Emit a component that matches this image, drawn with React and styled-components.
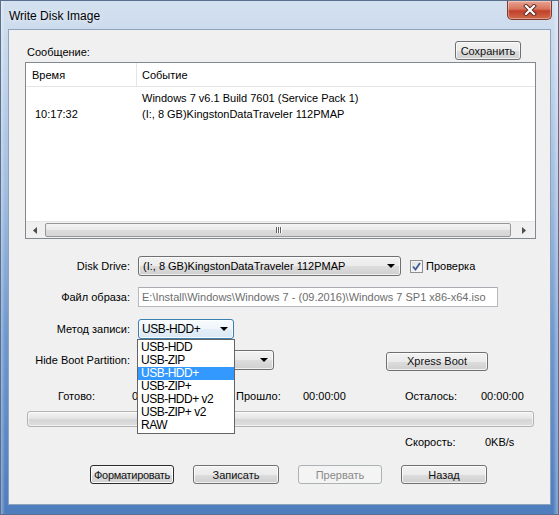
import React from "react";
import styled, { createGlobalStyle, css } from "styled-components";

const Global = createGlobalStyle`
  html, body { margin: 0; padding: 0; }
  body { width: 559px; height: 515px; overflow: hidden; font-family: "Liberation Sans", Arial, sans-serif; }
  * { box-sizing: border-box; }
`;

const Window = styled.div`
  width: 559px;
  height: 515px;
  display: flex;
  flex-direction: column;
  padding: 0 7px 9px 7px;
  background:
    linear-gradient(to right, rgba(255,255,255,0.35) 0, rgba(255,255,255,0) 4px, rgba(255,255,255,0) 552px, rgba(255,255,255,0.3) 556px),
    linear-gradient(to bottom, #d3e0ef 0%, #c4d6eb 12%, #9cb9de 40%, #6f98cf 65%, #4e7dbe 100%);
  border: 1px solid #5a6f8c;
`;

const TitleBar = styled.div`
  height: 28px;
  display: flex;
  align-items: flex-start;
  justify-content: space-between;
  padding-left: 1px;
`;

const Title = styled.div`
  font-size: 12px;
  color: #000;
  line-height: 14px;
  padding-top: 8px;
  text-shadow: 0 0 6px rgba(255,255,255,0.9);
`;

const CloseButton = styled.div`
  width: 45px;
  height: 19px;
  margin-right: -1px;
  border: 1px solid #7e3b32;
  border-top: none;
  border-radius: 0 0 5px 5px;
  background: linear-gradient(to bottom, #e8a493 0%, #d7735c 45%, #c2402a 55%, #cf6a4b 100%);
  display: flex;
  align-items: center;
  justify-content: center;
  box-shadow: inset 0 0 0 1px rgba(255,255,255,0.35);
`;

const Client = styled.div`
  flex: 1;
  border: 1px solid #8ea2bc;
  background: #f0f0f0;
  padding: 11px 14px 0 16px;
  display: flex;
  flex-direction: column;
  font-size: 11px;
  color: #000;
`;

const MessageHeader = styled.div`
  height: 19px;
  display: flex;
  align-items: center;
  justify-content: space-between;
  padding-left: 2px;
  padding-right: 15px;
`;

const PlainLabel = styled.span`
  font-size: 11px;
  line-height: 13px;
  padding-top: 3px;
`;

const Button = styled.button`
  font-family: "Liberation Sans", Arial, sans-serif;
  font-size: 11px;
  color: #111;
  height: 19px;
  width: ${p => p.$w}px;
  padding: 0;
  border: 1px solid #707070;
  border-radius: 3px;
  background: linear-gradient(to bottom, #f2f2f2 0%, #ebebeb 50%, #dddddd 51%, #cfcfcf 100%);
  box-shadow: inset 0 0 0 1px rgba(255,255,255,0.7);
  display: flex;
  align-items: center;
  justify-content: center;
  ${p => p.$default && css`
    border-color: #2b2b2b;
    box-shadow: inset 0 0 0 1px #fbfbfb;
    letter-spacing: -0.3px;
  `}
  ${p => p.disabled && css`
    color: #8a8a8a;
    border-color: #adb2b5;
    background: #f4f4f4;
    box-shadow: none;
  `}
`;

const ListView = styled.div`
  margin-top: 2px;
  height: 177px;
  border: 1px solid #828790;
  background: #fff;
  display: flex;
  flex-direction: column;
`;

const ListHeader = styled.div`
  height: 24px;
  display: flex;
  border-bottom: 1px solid #e5e5e5;
  background: #fff;
`;

const HeaderCell = styled.div`
  width: ${p => (p.$w ? `${p.$w}px` : "auto")};
  flex: ${p => (p.$w ? "none" : "1")};
  padding-left: ${p => p.$pad}px;
  display: flex;
  align-items: center;
  border-right: ${p => (p.$w ? "1px solid #e5e5e5" : "none")};
  font-size: 11px;
`;

const ListBody = styled.div`
  flex: 1;
  padding-top: 3px;
`;

const ListRow = styled.div`
  height: 16px;
  display: flex;
  align-items: center;
`;

const Cell = styled.div`
  width: ${p => (p.$w ? `${p.$w}px` : "auto")};
  flex: ${p => (p.$w ? "none" : "1")};
  padding-left: ${p => p.$pad}px;
  white-space: nowrap;
  font-size: 11px;
`;

const HScroll = styled.div`
  height: 17px;
  display: flex;
  align-items: stretch;
  background: #f0f0f0;
  border-top: 1px solid #e6e6e6;
`;

const ScrollArrow = styled.div`
  width: ${p => p.$w}px;
  display: flex;
  align-items: center;
  justify-content: center;
`;

const ScrollThumb = styled.div`
  flex: 1;
  margin: 1px 1px;
  border: 1px solid #979797;
  border-radius: 2px;
  background: linear-gradient(to bottom, #f4f4f4 0%, #e9e9e9 50%, #dcdcdc 51%, #d5d5d5 100%);
  display: flex;
  align-items: center;
  justify-content: center;
`;

const Grip = styled.div`
  display: flex;
  gap: 1px;
  & > span {
    width: 1px;
    height: 6px;
    background: #606060;
    box-shadow: 1px 0 0 #fff;
  }
`;

const FormRow = styled.div`
  display: flex;
  align-items: center;
  height: 20px;
  margin-top: ${p => p.$mt}px;
  position: relative;
`;

const FormLabel = styled.label`
  width: 105px;
  text-align: right;
  margin-right: 8px;
  font-size: 11px;
  line-height: 20px;
  flex: none;
`;

const Combo = styled.div`
  position: relative;
  width: ${p => p.$w}px;
  height: 20px;
  border: 1px solid #707070;
  border-radius: 3px;
  background: linear-gradient(to bottom, #f2f2f2 0%, #ebebeb 50%, #dddddd 51%, #cfcfcf 100%);
  box-shadow: inset 0 0 0 1px rgba(255,255,255,0.7);
  display: flex;
  align-items: center;
  padding-left: 4px;
  font-size: 11px;
  white-space: nowrap;
  ${p => p.$focus && css`
    border-color: #3c7fb1;
    background: linear-gradient(to bottom, #f7fbfe 0%, #eef5fa 50%, #e3eef7 51%, #dbe9f4 100%);
    padding-left: 3px;
    font-size: 12px;
    letter-spacing: -0.4px;
  `}
`;

const ComboArrow = styled.div`
  position: absolute;
  right: 5px;
  top: 50%;
  margin-top: -2px;
  width: 0;
  height: 0;
  border-left: 4px solid transparent;
  border-right: 4px solid transparent;
  border-top: 4px solid #000;
`;

const CheckWrap = styled.label`
  display: flex;
  align-items: center;
  margin-left: 9px;
  gap: 3px;
  font-size: 11px;
`;

const CheckBox = styled.div`
  width: 13px;
  height: 13px;
  border: 1px solid #8f8f8f;
  background: linear-gradient(135deg, #dcdcdc 0%, #ffffff 100%);
  box-shadow: inset 0 0 0 1px #f4f4f4;
  display: flex;
  align-items: center;
  justify-content: center;
`;

const TextBox = styled.div`
  width: ${p => p.$w}px;
  height: 20px;
  border: 1px solid #b5b8bd;
  border-top-color: #abadb3;
  background: #fff;
  color: #6d6d6d;
  font-size: 11px;
  display: flex;
  align-items: center;
  padding-left: 3px;
  white-space: nowrap;
  overflow: hidden;
`;

const DropList = styled.div`
  position: absolute;
  left: -2px;
  top: 19px;
  width: 98px;
  border: 1px solid #646464;
  background: #fff;
  padding: 1px 0 1px;
  z-index: 10;
`;

const DropItem = styled.div`
  height: 13px;
  line-height: 13px;
  font-size: 12px;
  letter-spacing: -0.5px;
  padding-left: 3px;
  white-space: nowrap;
  ${p => p.$selected && css`
    background: #3399ff;
    color: #fff;
  `}
`;

const StatusRow = styled.div`
  display: grid;
  grid-template-columns: ${p => p.$cols};
  padding-left: ${p => p.$pl}px;
  margin-top: ${p => p.$mt}px;
  height: 13px;
  line-height: 13px;
  font-size: 11px;
  white-space: nowrap;
`;

const Progress = styled.div`
  margin: 8px 2px 0 2px;
  height: 16px;
  border: 1px solid #b2b2b2;
  border-radius: 3px;
  background: linear-gradient(to bottom, #f3f3f3 0%, #e6e6e6 45%, #d6d6d6 55%, #dedede 100%);
  box-shadow: inset 0 0 0 1px rgba(255,255,255,0.6);
`;

const ButtonRow = styled.div`
  display: flex;
  gap: 19px;
  padding-left: 65px;
  margin-top: 16px;
`;

const Tri = ({ dir }) => (
  <svg width="4" height="7" viewBox="0 0 4 7">
    {dir === "left" ? <path d="M4 0 L0 3.5 L4 7 Z" fill="#4d4d4d" /> : <path d="M0 0 L4 3.5 L0 7 Z" fill="#4d4d4d" />}
  </svg>
);

export default function App() {
  const items = ["USB-HDD", "USB-ZIP", "USB-HDD+", "USB-ZIP+", "USB-HDD+ v2", "USB-ZIP+ v2", "RAW"];
  return (
    <>
      <Global />
      <Window>
        <TitleBar>
          <Title>Write Disk Image</Title>
          <CloseButton>
            <svg width="14" height="12" viewBox="0 0 14 12">
              <path d="M3 2 L11 10 M11 2 L3 10" stroke="#5a2a22" strokeWidth="4" strokeLinecap="square" />
              <path d="M3 2 L11 10 M11 2 L3 10" stroke="#ffffff" strokeWidth="2.2" strokeLinecap="square" />
            </svg>
          </CloseButton>
        </TitleBar>
        <Client>
          <MessageHeader>
            <PlainLabel>Сообщение:</PlainLabel>
            <Button $w={66}>Сохранить</Button>
          </MessageHeader>
          <ListView>
            <ListHeader>
              <HeaderCell $w={111} $pad={6}>Время</HeaderCell>
              <HeaderCell $pad={5}>Событие</HeaderCell>
            </ListHeader>
            <ListBody>
              <ListRow>
                <Cell $w={112} $pad={9}></Cell>
                <Cell $pad={4}>Windows 7 v6.1 Build 7601 (Service Pack 1)</Cell>
              </ListRow>
              <ListRow>
                <Cell $w={112} $pad={9}>10:17:32</Cell>
                <Cell $pad={4}>(I:, 8 GB)KingstonDataTraveler 112PMAP</Cell>
              </ListRow>
            </ListBody>
            <HScroll>
              <ScrollArrow $w={18}><Tri dir="left" /></ScrollArrow>
              <ScrollThumb>
                <Grip><span /><span /><span /></Grip>
              </ScrollThumb>
              <ScrollArrow $w={23}><Tri dir="right" /></ScrollArrow>
            </HScroll>
          </ListView>

          <FormRow $mt={17}>
            <FormLabel>Disk Drive:</FormLabel>
            <Combo $w={263}>
              (I:, 8 GB)KingstonDataTraveler 112PMAP
              <ComboArrow />
            </Combo>
            <CheckWrap>
              <CheckBox>
                <svg width="9" height="9" viewBox="0 0 9 9">
                  <path d="M1 4.5 L3.5 7.5 L8 1" stroke="#3f5b96" strokeWidth="1.8" fill="none" />
                </svg>
              </CheckBox>
              Проверка
            </CheckWrap>
          </FormRow>

          <FormRow $mt={11}>
            <FormLabel>Файл образа:</FormLabel>
            <TextBox $w={360}>E:\Install\Windows\Windows 7 - (09.2016)\Windows 7 SP1 x86-x64.iso</TextBox>
          </FormRow>

          <FormRow $mt={12}>
            <FormLabel>Метод записи:</FormLabel>
            <Combo $w={96} $focus>
              USB-HDD+
              <ComboArrow />
              <DropList>
                {items.map(it => (
                  <DropItem key={it} $selected={it === "USB-HDD+"}>{it}</DropItem>
                ))}
              </DropList>
            </Combo>
          </FormRow>

          <FormRow $mt={11}>
            <FormLabel>Hide Boot Partition:</FormLabel>
            <Combo $w={136}>
              <ComboArrow />
            </Combo>
            <Button $w={102} style={{ marginLeft: 112, marginTop: 2 }}>Xpress Boot</Button>
          </FormRow>

          <StatusRow $mt={20} $pl={33} $cols="74px 104px 67px 102px 76px auto">
            <span>Готово:</span>
            <span>0%</span>
            <span>Прошло:</span>
            <span>00:00:00</span>
            <span>Осталось:</span>
            <span>00:00:00</span>
          </StatusRow>

          <Progress />

          <StatusRow $mt={9} $pl={380} $cols="80px auto">
            <span>Скорость:</span>
            <span>0KB/s</span>
          </StatusRow>

          <ButtonRow>
            <Button $w={84} $default>Форматировать</Button>
            <Button $w={86}>Записать</Button>
            <Button $w={84} disabled>Прервать</Button>
            <Button $w={86}>Назад</Button>
          </ButtonRow>
        </Client>
      </Window>
    </>
  );
}
